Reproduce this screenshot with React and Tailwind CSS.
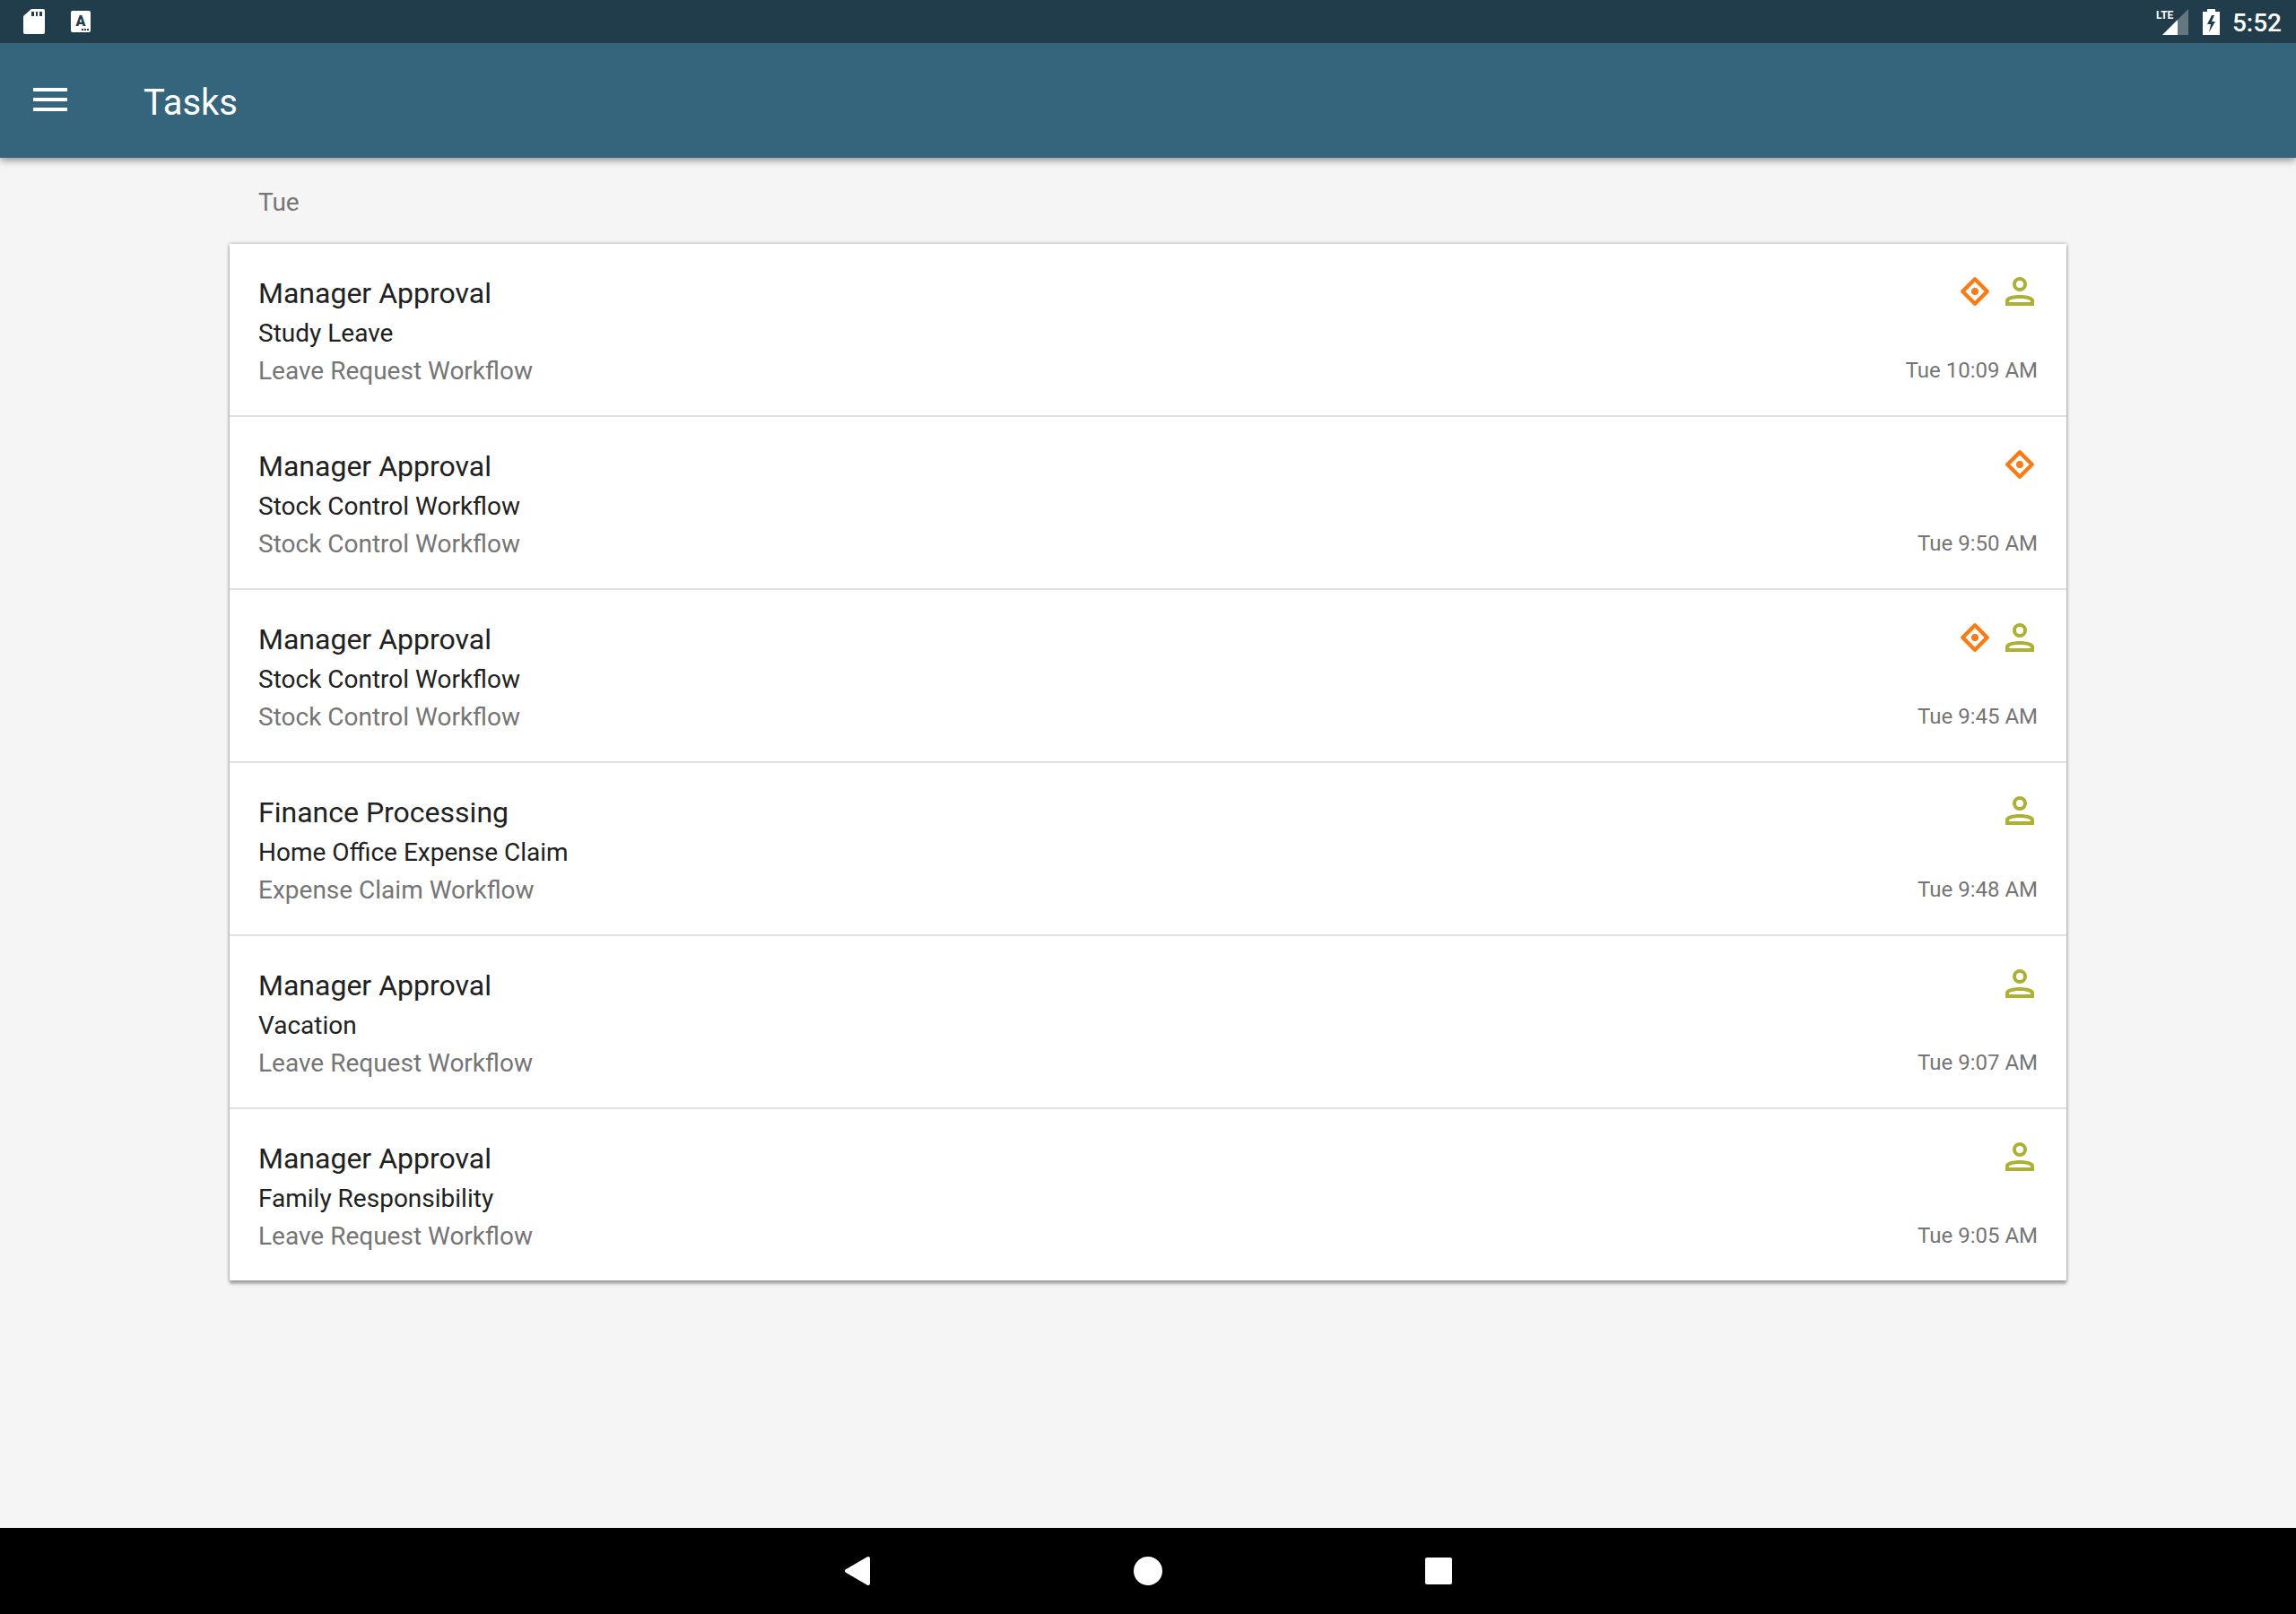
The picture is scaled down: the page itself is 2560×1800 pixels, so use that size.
const tasks = [
  { title: "Manager Approval", subject: "Study Leave", workflow: "Leave Request Workflow", time: "Tue 10:09 AM", priority: true, personal: true },
  { title: "Manager Approval", subject: "Stock Control Workflow", workflow: "Stock Control Workflow", time: "Tue 9:50 AM", priority: true, personal: false },
  { title: "Manager Approval", subject: "Stock Control Workflow", workflow: "Stock Control Workflow", time: "Tue 9:45 AM", priority: true, personal: true },
  { title: "Finance Processing", subject: "Home Office Expense Claim", workflow: "Expense Claim Workflow", time: "Tue 9:48 AM", priority: false, personal: true },
  { title: "Manager Approval", subject: "Vacation", workflow: "Leave Request Workflow", time: "Tue 9:07 AM", priority: false, personal: true },
  { title: "Manager Approval", subject: "Family Responsibility", workflow: "Leave Request Workflow", time: "Tue 9:05 AM", priority: false, personal: true },
];

function DiamondIcon() {
  return (
    <svg className="size-12 text-[#f97b16]" viewBox="0 0 48 48" fill="none" aria-hidden="true">
      <path d="M24 10.300 37.700 24 24 37.700 10.300 24Z" stroke="currentColor" strokeWidth="4.400" strokeLinejoin="round" />
      <circle cx="24" cy="24" r="4" fill="currentColor" />
    </svg>
  );
}

function PersonIcon() {
  return (
    <svg className="size-12 text-[#acb035]" viewBox="0 0 48 48" fill="none" aria-hidden="true">
      <circle cx="24" cy="16" r="6" stroke="currentColor" strokeWidth="4" />
      <path fillRule="evenodd" fill="currentColor" d="M8 40v-6c0-4 8-6 16-6s16 2 16 6v6ZM12 36h24v-1c0-2-6-3-12-3s-12 1-12 3Z" />
    </svg>
  );
}

function StatusBar() {
  return (
    <div className="flex h-12 items-center justify-between bg-[#213d4b] pl-[26px] pr-4 text-white">
      <div className="flex items-center gap-[29px]">
        <svg className="h-7 w-6" viewBox="0 0 24 28" aria-hidden="true">
          <path fillRule="evenodd" fill="#fff" d="M9 0h13a2 2 0 0 1 2 2v24a2 2 0 0 1-2 2H2a2 2 0 0 1-2-2V8ZM9 3v5h3V3ZM14 3v5h2V3ZM18 3v5h3V3Z" />
        </svg>
        <svg className="h-6 w-[22px]" viewBox="0 0 22 24" aria-hidden="true">
          <rect width="22" height="24" rx="2" fill="#fff" />
          <text x="11" y="17" textAnchor="middle" className="fill-[#213d4b] text-base font-black">A</text>
          <path d="M12 20h2v2h-2ZM15 20h2v2h-2ZM18 20h2v2h-2Z" fill="#213d4b" />
        </svg>
      </div>
      <div className="flex items-center">
        <svg className="h-[30px] w-9" viewBox="0 0 36 30" aria-hidden="true">
          <path d="M36 1V30H7Z" fill="#fff" fillOpacity=".3" />
          <path d="M24 13V30H7Z" fill="#fff" />
          <text x="0" y="12" className="fill-white font-['Liberation_Sans_Narrow','Roboto',sans-serif] text-[12px] font-bold">LTE</text>
        </svg>
        <svg className="ml-4 h-[29px] w-[19px]" viewBox="0 0 19 29" aria-hidden="true">
          <path fillRule="evenodd" fill="#fff" d="M5 0h9v3h5v26H0V3h5ZM10 7 5 17h4l-2 9 7-12h-4l3-7Z" />
        </svg>
        <span className="mt-1 ml-3.5 text-[28px] leading-8 font-medium">5:52</span>
      </div>
    </div>
  );
}

function TaskRow({ task }) {
  return (
    <li className="flex justify-between border-b-2 border-[#e0e0e0] bg-white px-8 pt-8 pb-7 shadow-[0_4px_4px_rgba(0,0,0,0.16)] last:border-b-0">
      <div>
        <h2 className="text-[32px] leading-[47px] text-[#212121]">{task.title}</h2>
        <p className="text-[28px] leading-[42px] text-[#212121]">{task.subject}</p>
        <p className="text-[28px] leading-[42px] text-[#757575]">{task.workflow}</p>
      </div>
      <div className="-mt-[3px] flex flex-col items-end justify-between">
        <div className="-mr-1 flex gap-0.5">
          {task.priority && <DiamondIcon />}
          {task.personal && <PersonIcon />}
        </div>
        <time className="text-2xl leading-[44px] text-[#757575]">{task.time}</time>
      </div>
    </li>
  );
}

export default function App() {
  return (
    <div className="flex min-h-screen flex-col bg-[#f5f5f5] font-['Roboto',sans-serif]">
      <header className="text-white shadow-[0_3px_8px_rgba(0,0,0,0.4)]">
        <StatusBar />
        <div className="flex h-32 items-center bg-[#35657c] pl-9">
          <button type="button" aria-label="Open menu" className="-mt-0.5 flex">
            <svg className="h-[26px] w-[40px]" viewBox="0 0 40 26" aria-hidden="true">
              <path d="M1 0H39V4H1ZM1 11H39V15H1ZM1 22H39V26H1Z" fill="currentColor" />
            </svg>
          </button>
          <h1 className="mt-1.5 ml-21 text-[40px] leading-[48px]">Tasks</h1>
        </div>
      </header>

      <main className="mx-auto w-4/5 grow">
        <h2 className="px-8 pt-6.5 pb-5.5 text-[28px] leading-12 text-[#757575]">Tue</h2>
        <ul className="shadow-[0_0_4px_rgba(0,0,0,0.36),0_4px_2px_rgba(0,0,0,0.12)]">
          {tasks.map((task) => (
            <TaskRow key={task.time} task={task} />
          ))}
        </ul>
      </main>

      <nav className="flex h-24 items-center justify-center gap-[260px] bg-black text-white">
        <button type="button" aria-label="Back">
          <svg className="size-16" viewBox="0 0 64 64" aria-hidden="true">
            <path d="M44 18V46L20 32Z" fill="currentColor" stroke="currentColor" strokeWidth="4" strokeLinejoin="round" />
          </svg>
        </button>
        <button type="button" aria-label="Home">
          <svg className="size-16" viewBox="0 0 64 64" aria-hidden="true">
            <circle cx="32" cy="32" r="16" fill="currentColor" />
          </svg>
        </button>
        <button type="button" aria-label="Recent apps">
          <svg className="size-16" viewBox="0 0 64 64" aria-hidden="true">
            <rect x="17" y="17" width="30" height="30" rx="2" fill="currentColor" />
          </svg>
        </button>
      </nav>
    </div>
  );
}
